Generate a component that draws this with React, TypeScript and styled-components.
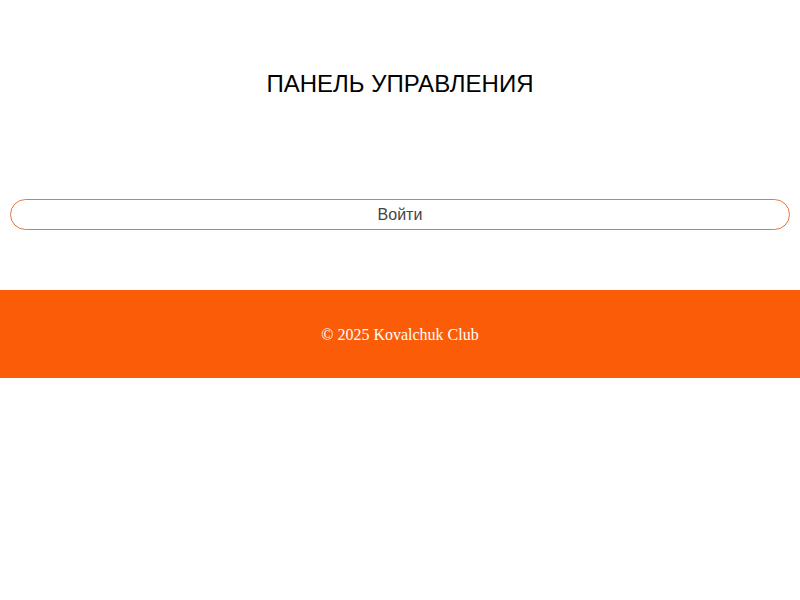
import React from "react";
import styled, { createGlobalStyle } from "styled-components";

export default function App() {
  return (
    <>
      <GlobalStyle />
      <Main>
        <Title>ПАНЕЛЬ УПРАВЛЕНИЯ</Title>
        <LoginButton>Войти</LoginButton>
      </Main>
      <Footer>
        <p>© 2025 Kovalchuk Club</p>
      </Footer>
    </>
  );
}

const GlobalStyle = createGlobalStyle`
  html, body {
    margin: 0;
    padding: 0;
    background: #fff;
  }
  body {
    font-family: "Liberation Sans", Arial, sans-serif;
  }
`;

const Main = styled.main`
  display: flex;
  flex-direction: column;
  padding: 70px 10px 0;
`;

const Title = styled.h1`
  margin: 0;
  font-size: 24px;
  font-weight: 400;
  line-height: 28px;
  text-align: center;
  color: #000;
`;

const LoginButton = styled.button`
  margin-top: 101px;
  height: 31px;
  width: 100%;
  border: 1px solid #e8773c;
  border-radius: 16px;
  background: #fff;
  font-family: "Liberation Sans", Arial, sans-serif;
  font-size: 16px;
  color: #444;
  cursor: pointer;
`;

const Footer = styled.footer`
  margin-top: 60px;
  height: 88px;
  padding-top: 1px;
  box-sizing: border-box;
  background: #fb5c07;
  display: flex;
  align-items: center;
  justify-content: center;

  p {
    margin: 0;
    font-family: "Liberation Serif", "Times New Roman", serif;
    font-size: 16px;
    color: #fff;
  }
`;
